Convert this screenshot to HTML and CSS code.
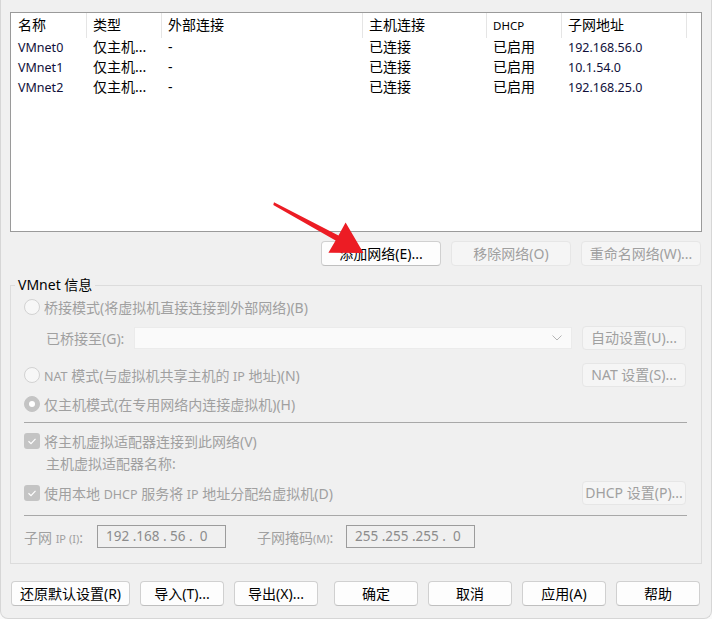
FILE: index.html
```html
<!DOCTYPE html>
<html lang="zh-CN">
<head>
    <meta charset="UTF-8">
    <title>虚拟网络编辑器</title>
    <link rel="stylesheet" href="styles.css">
</head>
<body>
    <div class="window">
        <!-- network list -->
        <div class="list">
            <div class="list-head">
                <div class="col">名称</div>
                <div class="col">类型</div>
                <div class="col">外部连接</div>
                <div class="col">主机连接</div>
                <div class="col"><span class="tiny">DHCP</span></div>
                <div class="col">子网地址</div>
            </div>
            <div class="list-row">
                <div class="cell"><span class="lat">VMnet0</span></div>
                <div class="cell">仅主机...</div>
                <div class="cell">-</div>
                <div class="cell">已连接</div>
                <div class="cell">已启用</div>
                <div class="cell"><span class="lat">192.168.56.0</span></div>
            </div>
            <div class="list-row">
                <div class="cell"><span class="lat">VMnet1</span></div>
                <div class="cell">仅主机...</div>
                <div class="cell">-</div>
                <div class="cell">已连接</div>
                <div class="cell">已启用</div>
                <div class="cell"><span class="lat">10.1.54.0</span></div>
            </div>
            <div class="list-row">
                <div class="cell"><span class="lat">VMnet2</span></div>
                <div class="cell">仅主机...</div>
                <div class="cell">-</div>
                <div class="cell">已连接</div>
                <div class="cell">已启用</div>
                <div class="cell"><span class="lat">192.168.25.0</span></div>
            </div>
        </div>

        <div class="list-actions">
            <button class="btn w120">添加网络(E)...</button>
            <button class="btn w120" disabled>移除网络(O)</button>
            <button class="btn w120" disabled>重命名网络(W)...</button>
        </div>

        <!-- VMnet info -->
        <fieldset class="group">
            <legend>VMnet 信息</legend>

            <div class="opt-row first">
                <span class="radio"></span>
                <span class="dim">桥接模式(将虚拟机直接连接到外部网络)(B)</span>
            </div>

            <div class="sub-row bridge">
                <span class="dim bridge-label">已桥接至(G):</span>
                <div class="combo">
                    <svg width="10" height="6" viewBox="0 0 10 6"><polyline points="0.5,0.5 5,5 9.5,0.5" fill="none" stroke="#b4b4b4" stroke-width="1"/></svg>
                </div>
                <button class="btn side" disabled>自动设置(U)...</button>
            </div>

            <div class="opt-row nat">
                <span class="radio"></span>
                <span class="dim"><span class="sm">NAT</span> 模式(与虚拟机共享主机的 <span class="sm">IP</span> 地址)(N)</span>
                <button class="btn side push" disabled>NAT 设置(S)...</button>
            </div>

            <div class="opt-row host">
                <span class="radio on"></span>
                <span class="dim">仅主机模式(在专用网络内连接虚拟机)(H)</span>
            </div>

            <div class="sep"></div>

            <div class="opt-row chk1">
                <span class="check"><svg width="16" height="16" viewBox="0 0 16 16"><polyline points="4.5,8.2 7,10.6 11.5,5.8" fill="none" stroke="#fff" stroke-width="1.2"/></svg></span>
                <span class="dim">将主机虚拟适配器连接到此网络(V)</span>
            </div>

            <div class="sub-row adapter">
                <span class="dim">主机虚拟适配器名称:</span>
            </div>

            <div class="opt-row chk2">
                <span class="check"><svg width="16" height="16" viewBox="0 0 16 16"><polyline points="4.5,8.2 7,10.6 11.5,5.8" fill="none" stroke="#fff" stroke-width="1.2"/></svg></span>
                <span class="dim">使用本地 <span class="sm">DHCP</span> 服务将 <span class="sm">IP</span> 地址分配给虚拟机(D)</span>
                <button class="btn side push" disabled>DHCP 设置(P)...</button>
            </div>

            <div class="sep sep2"></div>

            <div class="ip-row">
                <span class="dim ip-label">子网 <span class="xs">IP (I)</span>:</span>
                <div class="ip-box">192 .168 . 56 .  0</div>
                <span class="dim mask-label">子网掩码<span class="xs">(M)</span>:</span>
                <div class="ip-box">255 .255 .255 .  0</div>
            </div>
        </fieldset>

        <div class="footer">
            <button class="btn w119">还原默认设置(R)</button>
            <button class="btn w84">导入(T)...</button>
            <button class="btn w84">导出(X)...</button>
            <button class="btn w84 gap-left">确定</button>
            <button class="btn w84">取消</button>
            <button class="btn w84">应用(A)</button>
            <button class="btn w84">帮助</button>
        </div>

        <svg class="arrow" width="712" height="619" viewBox="0 0 712 619">
            <polygon points="273,202.3 337.5,235.4 344.6,222.6 362.5,253 327.4,252.8 334.6,240.6 272.3,205" fill="#ec1c24"/>
        </svg>
    </div>
</body>
</html>
```

FILE: styles.css
```css
* {
    box-sizing: border-box;
}

body {
    margin: 0;
    background: #fafafa;
    font-family: "Noto Sans", "Noto Sans CJK SC", sans-serif;
    font-size: 14px;
    color: #000;
}

.window {
    position: relative;
    width: 712px;
    height: 619px;
    padding: 12px 9px 0 9px;
    background: #f0f0f0;
    border-radius: 0 0 8px 8px;
    border: 1px solid #d6d6d6;
    border-top: none;
    overflow: hidden;
}

/* list */
.list {
    height: 220px;
    background: #fff;
    border: 1px solid #9a9a9a;
}

.list-head,
.list-row {
    display: grid;
    grid-template-columns: 76px 75px 201px 124px 75px 125px;
}

.list-head {
    height: 24px;
    line-height: 24px;
}

.list-head .col {
    padding-left: 6px;
    border-right: 1px solid #e5e5e5;
    white-space: nowrap;
}

.list-head .col:first-child,
.list-row .cell:first-child {
    padding-left: 7px;
}

.list-row {
    height: 20px;
    line-height: 20px;
}

.cell {
    padding-left: 6px;
    white-space: nowrap;
}

.lat {
    font-size: 12.5px;
    color: #10103a;
}

.tiny {
    font-size: 11.5px;
}

.sm {
    font-size: 12.5px;
}

.xs {
    font-size: 11px;
}

/* buttons */
.btn {
    height: 25px;
    padding: 0;
    font-family: inherit;
    font-size: 14px;
    line-height: 23px;
    color: #000;
    background: #fdfdfd;
    border: 1px solid #d0d0d0;
    border-bottom-color: #bfbfbf;
    border-radius: 4px;
    white-space: nowrap;
}

.btn:disabled {
    color: #a0a0a0;
    background: #f5f5f5;
    border-color: #e6e6e6;
}

.w120 { width: 120px; }
.w119 { width: 119px; }
.w84 { width: 84px; }

.list-actions {
    display: flex;
    justify-content: flex-end;
    gap: 10px;
    margin-top: 9px;
    padding-right: 1px;
}

/* group box */
.group {
    margin: 9px 0 0 0;
    padding: 0 15px 15px 13px;
    border: 1px solid #dcdcdc;
    min-width: 0;
}

.group legend {
    margin-left: -9px;
    padding: 0 3px;
    line-height: 20px;
    height: 20px;
}

.dim {
    color: #a0a0a0;
    white-space: nowrap;
}

.opt-row,
.sub-row {
    display: flex;
    align-items: center;
    height: 22px;
    gap: 4px;
}

.opt-row.first {
    margin-top: 1px;
}

.radio {
    width: 16px;
    height: 16px;
    flex: none;
    border-radius: 50%;
    background: #f7f7f7;
    border: 1px solid #d2d2d2;
}

.radio.on {
    background: #c4c4c4;
    border-color: #c4c4c4;
    position: relative;
}

.radio.on::after {
    content: "";
    position: absolute;
    left: 4px;
    top: 4px;
    width: 6px;
    height: 6px;
    border-radius: 50%;
    background: #fff;
}

.check {
    width: 16px;
    height: 16px;
    flex: none;
    border-radius: 3px;
    background: #c4c4c4;
    display: flex;
}

.sub-row {
    padding-left: 22px;
}

.bridge {
    height: 25px;
    margin-top: 7px;
    gap: 0;
}

.bridge-label {
    width: 88px;
}

.combo {
    flex: 1;
    height: 22px;
    margin-right: 10px;
    background: #fafafa;
    border: 1px solid #ebebeb;
    display: flex;
    align-items: center;
    justify-content: flex-end;
    padding-right: 9px;
}

.side {
    width: 104px;
    height: 24px;
    line-height: 22px;
    background: #fafafa;
    border-color: #ececec;
}

.push {
    margin-left: auto;
}

.nat {
    height: 25px;
    margin-top: 12px;
}

.host {
    margin-top: 6px;
}

.sep {
    height: 1px;
    margin-top: 7px;
    margin-right: -1px;
    background: #a8a8a8;
}

.sep2 {
    margin-top: 10px;
}

.chk1 {
    margin-top: 7px;
}

.adapter {
    height: 22px;
}

.chk2 {
    height: 24px;
    margin-top: 7px;
}

.ip-row {
    display: flex;
    align-items: center;
    height: 23px;
    margin-top: 9px;
}

.ip-label {
    width: 73px;
}

.mask-label {
    width: 89px;
    margin-left: 31px;
}

.ip-box {
    width: 129px;
    height: 23px;
    line-height: 21px;
    padding-left: 8px;
    border: 1px solid #9c9c9c;
    color: #8c8c8c;
    font-size: 13.5px;
    white-space: pre;
}

/* footer */
.footer {
    display: flex;
    gap: 10px;
    margin-top: 17px;
    padding-left: 1px;
}

.gap-left {
    margin-left: 6px;
}

.arrow {
    position: absolute;
    left: 0;
    top: 0;
    pointer-events: none;
}
```
